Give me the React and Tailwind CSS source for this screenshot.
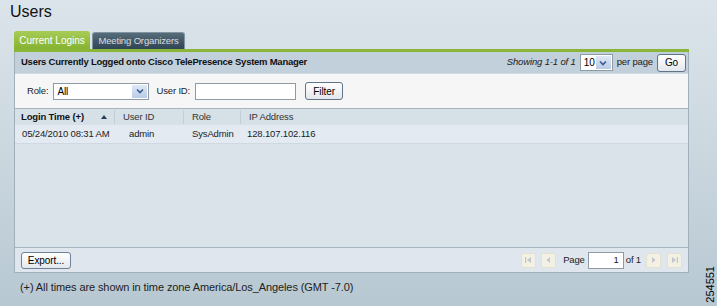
import React from 'react';

const rows = [
    { time: '05/24/2010 08:31 AM', user: 'admin', role: 'SysAdmin', ip: '128.107.102.116' },
];

const SelectBox = ({ value, width }) => (
    <div className={`flex h-[17px] items-center border border-[#8e9ba5] bg-white ${width}`}>
        <span className="flex-1 pl-[3px] text-[10px] text-black">{value}</span>
        <span className="mr-[1px] flex h-[13px] w-[15px] items-center justify-center bg-gradient-to-b from-[#dfe8f5] to-[#b9cbe6]">
            <svg width="8" height="6" viewBox="0 0 8 6">
                <path d="M1 1.5 L4 4.5 L7 1.5" stroke="#3b5b8f" strokeWidth="1.6" fill="none" />
            </svg>
        </span>
    </div>
);

const Button = ({ children, className = '' }) => (
    <button className={`flex h-[17px] items-center justify-center whitespace-nowrap rounded-[3px] border border-[#5e7489] bg-gradient-to-b from-white to-[#e4e8ec] text-[10px] tracking-[-0.1px] text-black ${className}`}>
        {children}
    </button>
);

const PagerBtn = ({ dir }) => (
    <span className="flex h-[15px] w-[15px] items-center justify-center rounded-[2px] border border-[#e3e1cf] bg-[#f3f1e3]">
        <svg width="9" height="8" viewBox="0 0 9 8">
            {dir === 'first' && (
                <>
                    <rect x="1" y="1" width="1.2" height="6" fill="#c3c6cc" />
                    <path d="M7 1 L3 4 L7 7 Z" fill="#c3c6cc" />
                </>
            )}
            {dir === 'prev' && <path d="M6 1 L2.5 4 L6 7 Z" fill="#c3c6cc" />}
            {dir === 'next' && <path d="M3 1 L6.5 4 L3 7 Z" fill="#c3c6cc" />}
            {dir === 'last' && (
                <>
                    <path d="M2 1 L6 4 L2 7 Z" fill="#c3c6cc" />
                    <rect x="6.8" y="1" width="1.2" height="6" fill="#c3c6cc" />
                </>
            )}
        </svg>
    </span>
);

export default function App() {
    return (
        <div className="relative h-[306px] w-[717px] overflow-hidden whitespace-nowrap bg-gradient-to-b from-[#dbe4ea] via-[#cbd7df] to-[#b7c8d2] font-[family-name:Liberation_Sans,Arial,sans-serif] text-[#1c1c1c]">
            {/* Title */}
            <h1 className="pl-[10px] pt-[2px] text-[16px] leading-[20px] text-[#111]">Users</h1>

            {/* Tabs */}
            <div className="ml-[14px] mt-[9px] flex h-[18px] items-end gap-[2px]">
                <div className="flex h-[18px] w-[76px] items-center justify-center rounded-t-[3px] bg-gradient-to-b from-[#a7cc55] to-[#86b332] text-[10px] text-white">
                    Current Logins
                </div>
                <div className="flex h-[17px] w-[93px] items-center justify-center rounded-t-[3px] border border-b-0 border-[#7f93a1] bg-gradient-to-b from-[#566c7b] to-[#2f4555] text-[9.5px] tracking-[-0.15px] text-[#d6dde2]">
                    Meeting Organizers
                </div>
            </div>

            {/* Panel */}
            <div className="ml-[14px] w-[675px] border-t-[3px] border-[#8ab537]">
                <div className="border-x border-b border-[#9fb0bc]">
                    <div className="flex h-[21px] items-center justify-between bg-[#c1d0db] pl-[6px] pr-[2px]">
                        <span className="text-[9.5px] font-bold tracking-[-0.25px] text-[#111]">Users Currently Logged onto Cisco TelePresence System Manager</span>
                        <div className="flex items-center gap-[4px]">
                            <span className="text-[9.5px] italic tracking-[-0.15px] text-[#222]">Showing 1-1 of 1</span>
                            <SelectBox value="10" width="w-[33px]" />
                            <span className="text-[9.5px] tracking-[-0.15px] text-[#222]">per page</span>
                            <Button className="h-[18px] w-[29px]">Go</Button>
                        </div>
                    </div>

                    {/* Filters */}
                    <div className="flex h-[35px] items-center border-t border-[#d3dbe1] bg-[#f6f6f6] pl-[12px] text-[9.5px] tracking-[-0.15px]">
                        <span className="mr-[5px] text-[#222]">Role:</span>
                        <SelectBox value="All" width="w-[96px]" />
                        <span className="ml-[7px] mr-[5px] text-[#222]">User ID:</span>
                        <div className="h-[17px] w-[101px] border border-[#8e9ba5] bg-white" />
                        <Button className="ml-[9px] h-[18px] w-[38px]">Filter</Button>
                    </div>

                    {/* Table */}
                    <div className="h-[139px] border-t border-[#a6b6c1] bg-[#dbe3ea] text-[9.5px] tracking-[-0.15px]">
                        <div className="grid h-[16px] grid-cols-[100px_69px_57px_1fr] items-center bg-[#d6e0e7]">
                            <div className="flex items-center justify-between border-r border-[#c3cfd8] pl-[6px] pr-[7px] font-bold text-[#111]">
                                <span>Login Time (+)</span>
                                <svg width="6" height="4" viewBox="0 0 6 4">
                                    <path d="M0 4 L3 0 L6 4 Z" fill="#2a3d5c" />
                                </svg>
                            </div>
                            <div className="border-r border-[#c3cfd8] pl-[8px] text-[#333]">User ID</div>
                            <div className="border-r border-[#c3cfd8] pl-[8px] text-[#333]">Role</div>
                            <div className="pl-[8px] text-[#333]">IP Address</div>
                        </div>
                        {rows.map((r) => (
                            <div key={r.ip} className="grid h-[19px] grid-cols-[100px_69px_57px_1fr] items-center border-b border-[#d0d9e1] bg-[#e3eaf2] text-[#222]">
                                <div className="pl-[7px]">{r.time}</div>
                                <div className="pl-[14px]">{r.user}</div>
                                <div className="pl-[8px]">{r.role}</div>
                                <div className="pl-[6px]">{r.ip}</div>
                            </div>
                        ))}
                    </div>

                    {/* Footer */}
                    <div className="flex h-[25px] items-center justify-between border-t border-[#a6b6c1] bg-[#dfe6ed] pl-[6px] pr-[6px] text-[9.5px] tracking-[-0.15px]">
                        <Button className="h-[17px] w-[50px] border-[#6d8296]">Export...</Button>
                        <div className="flex items-center">
                            <PagerBtn dir="first" />
                            <span className="ml-[5px]"><PagerBtn dir="prev" /></span>
                            <span className="ml-[7px] text-[#222]">Page</span>
                            <div className="ml-[3px] flex h-[17px] w-[36px] items-center justify-end border border-[#8e9ba5] bg-white pr-[4px]">1</div>
                            <span className="ml-[2px] text-[#222]">of 1</span>
                            <span className="ml-[5px]"><PagerBtn dir="next" /></span>
                            <span className="ml-[6px]"><PagerBtn dir="last" /></span>
                        </div>
                    </div>
                </div>
            </div>

            <p className="mt-[6px] pl-[20px] text-[11px] tracking-[-0.1px] text-[#222]">(+) All times are shown in time zone America/Los_Angeles (GMT -7.0)</p>

            <span className="absolute bottom-[3px] right-[1px] rotate-180 text-[11px] leading-none text-black [writing-mode:vertical-rl]">254551</span>
        </div>
    );
}
